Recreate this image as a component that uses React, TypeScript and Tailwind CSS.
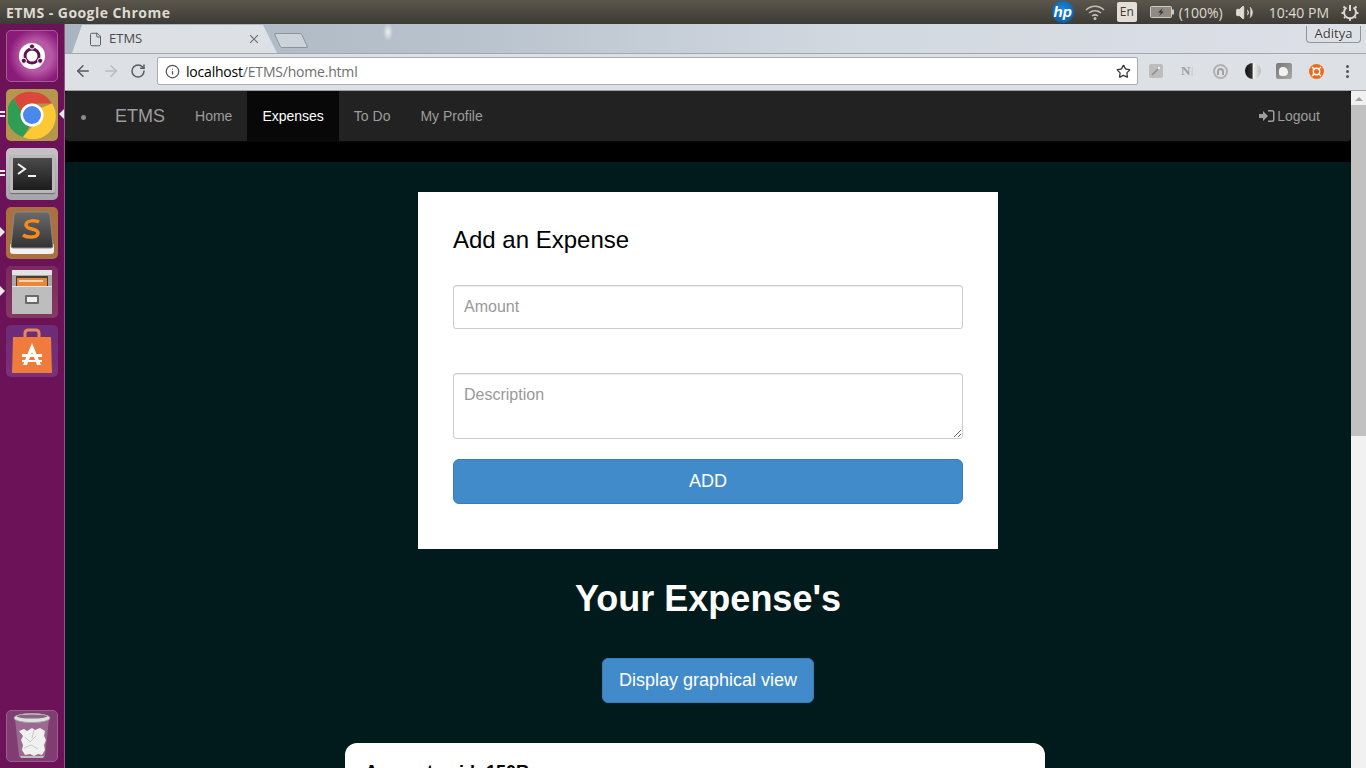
import { ReactNode } from "react";
import { ArrowLeft, ArrowRight, RotateCw, Star, X, Info, File, Volume2 } from "lucide-react";

const Tile = ({ className, children, pip }: { className: string; children: ReactNode; pip?: string }) => (
  <div className="relative flex h-[59px] w-[64px] shrink-0 items-center justify-center">
    {pip === "double" && (
      <div className="absolute left-0 top-[26px] flex flex-col gap-[2px]">
        <span className="h-[2px] w-[5px] bg-[#eeeeee]" />
        <span className="h-[2px] w-[5px] bg-[#eeeeee]" />
      </div>
    )}
    {pip === "single" && (
      <span className="absolute left-0 top-[24px] h-0 w-0 border-y-[5px] border-l-[5px] border-y-transparent border-l-[#e8e8e8]" />
    )}
    <div className={`flex h-[52px] w-[52px] items-center justify-center overflow-hidden rounded-[5px] ${className}`}>
      {children}
    </div>
  </div>
);

const Launcher = () => (
  <aside className="flex h-full w-[65px] shrink-0 flex-col border-r border-[#8a5a80] bg-[#6c1258] pt-[2px]">
    <Tile className="bg-[radial-gradient(circle_at_58%_50%,#b75aa6_0,#b75aa6_40%,#8c1a78_72%)] border border-[#a85a98]">
      <svg width="36" height="36" viewBox="0 0 36 36">
        <circle cx="18" cy="18" r="13" fill="#fff" />
        <circle cx="18" cy="18" r="7" fill="none" stroke="#5e1650" strokeWidth="3" />
        <circle cx="18" cy="8.500" r="2.600" fill="#5e1650" stroke="#fff" />
        <circle cx="9.800" cy="22.800" r="2.600" fill="#5e1650" stroke="#fff" />
        <circle cx="26.200" cy="22.800" r="2.600" fill="#5e1650" stroke="#fff" />
      </svg>
    </Tile>
    <div className="relative">
      <span className="absolute right-0 top-[24px] h-0 w-0 border-y-[5px] border-r-[5px] border-y-transparent border-r-[#e8e8e8]" />
      <Tile pip="double" className="bg-[#b4964e]">
        <svg width="48" height="48" viewBox="0 0 48 48">
          <path d="M24 1a23 23 0 0 1 20 11.500H24a11.500 11.500 0 0 0-11 8L5.500 7.500A23 23 0 0 1 24 1z" fill="#d9483b" />
          <path d="M5.500 7.500 16 25a11.500 11.500 0 0 0 6 9.500L15 46A23 23 0 0 1 5.500 7.500z" fill="#2f9e54" />
          <path d="M44 12.500A23 23 0 0 1 15 46l10-11.500A11.500 11.500 0 0 0 33 17z" fill="#fcc934" />
          <circle cx="24" cy="24" r="11.500" fill="#fff" />
          <circle cx="24" cy="24" r="9" fill="#4a88ee" />
        </svg>
      </Tile>
    </div>
    <Tile pip="double" className="bg-[linear-gradient(#c6c2c8,#a8a4ac)]">
      <div className="flex h-[38px] w-[45px] items-start rounded-[2px] border-[3px] border-[#b9b9b9] bg-[linear-gradient(#4a4a4a,#1c1c1c)] p-[3px] shadow-[0_1px_1px_#666]">
        <svg width="30" height="20" viewBox="0 0 30 20">
          <path d="M2 3l7 5-7 5" fill="none" stroke="#f2f2f2" strokeWidth="2" />
          <path d="M12 15h8" stroke="#f2f2f2" strokeWidth="2" />
        </svg>
      </div>
    </Tile>
    <Tile pip="single" className="bg-[#a9713f]">
      <svg width="46" height="44" viewBox="0 0 46 44">
        <defs>
          <linearGradient id="keycap" x1="0" y1="0" x2="0" y2="1">
            <stop offset="0" stopColor="#6a6a6a" />
            <stop offset="1" stopColor="#333333" />
          </linearGradient>
        </defs>
        <path d="M1 33h44v7a3 3 0 0 1-3 3H4a3 3 0 0 1-3-3z" fill="#f1f1f1" />
        <path d="M8 1h30a3 3 0 0 1 3 3l3 31a2 2 0 0 1-2 2H4a2 2 0 0 1-2-2L5 4a3 3 0 0 1 3-3z" fill="url(#keycap)" stroke="#888" />
        <path d="M30 11c-3-2-13-2-13 3 0 5 12 3 12 8 0 5-11 5-15 2" fill="none" stroke="#f28c1e" strokeWidth="3.500" />
      </svg>
    </Tile>
    <Tile pip="single" className="bg-[linear-gradient(#7a2a5e,#843a60)]">
      <svg width="42" height="46" viewBox="0 0 42 46">
        <rect x="1" y="1" width="40" height="44" rx="2" fill="#a8a8a8" />
        <rect x="1" y="1" width="40" height="5" fill="#e2e2e2" />
        <rect x="5" y="7" width="32" height="11" fill="#4a3a34" />
        <rect x="6" y="9" width="30" height="9" fill="#e8863c" />
        <rect x="8" y="11" width="24" height="2" fill="#f8d8b0" />
        <rect x="1" y="17" width="40" height="28" fill="#bdbdbd" />
        <rect x="1" y="17" width="40" height="1" fill="#e6e6e6" />
        <rect x="14" y="26" width="14" height="9" rx="1" fill="#6a6a6a" />
        <rect x="16" y="28" width="10" height="5" fill="#eeeeee" />
      </svg>
    </Tile>
    <Tile className="bg-[linear-gradient(#6c2c78,#7a3076)]">
      <svg width="42" height="46" viewBox="0 0 42 46">
        <path d="M14 9V5a3 3 0 0 1 3-3h8a3 3 0 0 1 3 3v4" fill="none" stroke="#e88a58" strokeWidth="3" />
        <path d="M2 9h38l1 36H1z" fill="#ef7c3c" />
        <path d="M21 15l-9 22h4l5-13 5 13h4z" fill="#fff" />
        <rect x="11" y="26" width="20" height="3" fill="#fff" />
        <rect x="11" y="32" width="20" height="2" fill="#fff" />
      </svg>
    </Tile>
    <div className="flex-1" />
    <Tile className="bg-[#813c71] border border-[#96608a]">
      <svg width="40" height="48" viewBox="0 0 40 48">
        <path d="M3 7l4 37a3 3 0 0 0 3 2h20a3 3 0 0 0 3-2l4-37z" fill="#9a6a90" />
        <ellipse cx="20" cy="6" rx="18" ry="4.500" fill="#e2e2e2" stroke="#a8a8a8" />
        <ellipse cx="20" cy="4.500" rx="15" ry="2" fill="#8a6684" />
        <path d="M7 19l5-2 3 2 5-3 3 2 5-2 5 3-1 5 2 4-2 5 1 5-3 5-4-1-4 2-4-2-5 1-3-5 1-5-2-5 2-4z" fill="#f0f0f0" />
        <path d="M13 25l5 5 6-6M12 36l7-3 7 4M22 18l-2 8" fill="none" stroke="#c8c8c8" />
        <path d="M8 44h24l-1 2H9z" fill="#bdbdbd" />
      </svg>
    </Tile>
    <div className="h-[3px]" />
  </aside>
);

const TopBar = () => (
  <header className="flex h-[24px] shrink-0 items-center justify-between bg-[linear-gradient(#5a564c,#3d3b36)] pl-[6px] pr-[7px] font-['Open_Sans',sans-serif] text-[#dfdbd2]">
    <span className="text-[14px] font-bold tracking-[0.45px]">ETMS - Google Chrome</span>
    <div className="flex items-center text-[14px]">
      <div className="mr-[11px] flex h-[22px] w-[22px] items-center justify-center rounded-full bg-[radial-gradient(circle_at_50%_40%,#1c8ad8,#0a4f9c)] font-['Liberation_Sans',sans-serif] text-[15px] font-bold italic text-white">
        hp
      </div>
      <svg className="mr-[12px]" width="20" height="15" viewBox="0 0 20 15" fill="none" stroke="#c4c0b8" strokeWidth="1.500">
        <path d="M1 5c5-5 13-5 18 0" />
        <path d="M4 8c3.500-3 8.500-3 12 0" />
        <path d="M7 11c2-1.500 4-1.500 6 0" />
        <circle cx="10" cy="13.500" r="0.800" fill="#c4c0b8" />
      </svg>
      <div className="mr-[13px] flex h-[20px] w-[20px] items-center justify-center rounded-[2px] bg-[#e3dfd8] text-[12px] text-[#3c3b37]">En</div>
      <svg className="mr-[5px]" width="24" height="12" viewBox="0 0 24 12">
        <rect x="0.500" y="0.500" width="21" height="11" rx="1" fill="#8e8b84" stroke="#cfcbc3" />
        <rect x="22" y="3.500" width="2" height="5" fill="#cfcbc3" />
        <path d="M13 2L8 6.500h3L9 10l5-4.500h-3z" fill="#33322e" />
      </svg>
      <span className="mr-[12px] text-[14px]">(100%)</span>
      <Volume2 className="mr-[15px]" size={19} color="#dfdbd2" fill="#dfdbd2" strokeWidth={1.200} />
      <span className="mr-[12px] text-[14px]">10:40 PM</span>
      <svg width="18" height="18" viewBox="0 0 18 18" fill="none" stroke="#dfdbd2" strokeWidth="2">
        <path d="M9 2v6" />
        <path d="M5.500 4.500a6 6 0 1 0 7 0" />
        <path d="M2.500 3.500l1.500 1.500M15.500 3.500L14 5M9 16v2M0.500 10h2M15.500 10h2M3 15l1-1M15 15l-1-1" strokeWidth="1.800" />
      </svg>
    </div>
  </header>
);

const ChromeBar = () => (
  <div className="shrink-0 font-['Open_Sans',sans-serif]">
    <div className="relative flex h-[29px] items-end bg-[radial-gradient(ellipse_5px_9px_at_323px_8px,#eef0f2,transparent),linear-gradient(90deg,#a8b4c0,#b8c2cc_30%,#d2d8e0_60%,#dde1e6)]">
      <div className="ml-[7px] flex h-[28px] w-[205px] items-center bg-[#dde1e6] [clip-path:polygon(0_100%,10px_0,191px_0,205px_100%)] pl-[16px] pr-[16px] text-[13px] text-[#4a4a4a]">
        <File size={15} color="#555" strokeWidth={1.500} />
        <span className="ml-[6px] flex-1">ETMS</span>
        <X size={14} color="#777" strokeWidth={2} />
      </div>
      <div className="mb-[5px] h-[15px] w-[28px] rounded-[2px] border border-[#8a949e] bg-[#cdd3da] [transform:skewX(25deg)]" />
      <div className="absolute right-[5px] top-[2px] flex h-[17px] w-[55px] items-center justify-center rounded-b-[4px] border border-t-0 border-[#8f959c] text-[13px] text-[#333] [text-shadow:0_0_1px_#fff,0_0_1px_#fff]">
        Aditya
      </div>
    </div>
    <div className="flex h-[38px] items-center border-y border-t-[#a0a8b0] border-b-[#a2a2a2] bg-[#dde1e6] pb-[2px] pl-[9px]">
      <ArrowLeft size={18} color="#5a5a5a" strokeWidth={2} />
      <ArrowRight className="ml-[10px]" size={18} color="#b8bcc0" strokeWidth={2} />
      <RotateCw className="ml-[10px]" size={16} color="#5a5a5a" strokeWidth={2.200} />
      <div className="ml-[11px] flex h-[28px] w-[981px] items-center rounded-[2px] border border-[#a8acb0] bg-white pl-[7px] pr-[6px]">
        <Info size={15} color="#555" strokeWidth={2} />
        <span className="ml-[6px] flex-1 text-[14px] tracking-[-0.2px] text-[#6e6e6e]">
          <span className="text-black">localhost</span>/ETMS/home.html
        </span>
        <Star size={15} color="#333" strokeWidth={2} />
      </div>
      <div className="ml-[11px] flex items-center">
        <svg width="14" height="14" viewBox="0 0 14 14">
          <rect width="14" height="14" rx="2" fill="#bdbdbd" />
          <path d="M3 11l6-6" stroke="#8a8a8a" strokeWidth="1.500" />
          <circle cx="10" cy="4" r="1.200" fill="#eeeeee" />
        </svg>
        <span className="ml-[18px] font-['Liberation_Serif',serif] text-[13px] font-bold text-[#a0a0a0]">N</span>
        <span className="text-[13px] font-light leading-none text-[#c0c0c0]">I</span>
        <div className="ml-[19px] flex h-[15px] w-[15px] items-center justify-center rounded-full border-2 border-[#b0b0b0]">
          <div className="h-[7px] w-[7px] rounded-t-full border-2 border-b-0 border-[#a0a0a0]" />
        </div>
        <div className="ml-[17px] h-[16px] w-[16px] rounded-full bg-[linear-gradient(90deg,#111,#333_45%,#f4f4f4_50%,#bbb)]" />
        <div className="ml-[15px] flex h-[16px] w-[16px] items-center justify-center rounded-[2px] bg-[linear-gradient(135deg,#777,#aaa)]">
          <div className="h-[9px] w-[9px] rounded-[50%_60%_50%_30%] bg-[#f2f2f2]" />
        </div>
        <svg className="ml-[17px]" width="15" height="15" viewBox="0 0 15 15">
          <circle cx="7.500" cy="7.500" r="7.500" fill="#f06a1e" />
          <circle cx="7.500" cy="7.500" r="3.200" fill="none" stroke="#fff" strokeWidth="1.400" />
          <path d="M3 3l2.500 2.500M12 3L9.500 5.500M3 12l2.500-2.500M12 12L9.500 9.500" stroke="#fff" strokeWidth="1.400" />
        </svg>
        <div className="ml-[22px] flex flex-col gap-[2px]">
          <span className="h-[3px] w-[3px] rounded-full bg-[#555]" />
          <span className="h-[3px] w-[3px] rounded-full bg-[#555]" />
          <span className="h-[3px] w-[3px] rounded-full bg-[#555]" />
        </div>
      </div>
    </div>
  </div>
);

const Navbar = () => (
  <nav className="flex h-[51px] shrink-0 items-stretch rounded-[4px] border-b border-[#080808] bg-[#222222] text-[14px] text-[#9d9d9d]">
    <span className="ml-[16px] mt-[24px] h-[5px] w-[5px] rounded-full bg-[#8a8a8a]" />
    <span className="ml-[29px] flex items-center text-[18px]">ETMS</span>
    <span className="ml-[15px] flex items-center px-[15px]">Home</span>
    <span className="flex items-center bg-[#080808] px-[15px] text-white">Expenses</span>
    <span className="flex items-center px-[15px]">To Do</span>
    <span className="flex items-center px-[15px]">My Profile</span>
    <span className="ml-auto flex items-center pr-[31px]">
      <svg className="mr-[2px]" width="16" height="14" viewBox="0 0 16 14" fill="#9d9d9d">
        <path d="M0 5h4V2l5 5-5 5V9H0z" />
        <path d="M9 1h4a2.500 2.500 0 0 1 2.500 2.500v7A2.500 2.500 0 0 1 13 13H9v-1.500h4a1 1 0 0 0 1-1v-7a1 1 0 0 0-1-1H9z" />
      </svg>
      Logout
    </span>
  </nav>
);

const Scrollbar = () => (
  <div className="flex w-[15px] shrink-0 flex-col items-center bg-[#f1f1f1]">
    <span className="mt-[6px] h-0 w-0 border-x-[4px] border-b-[4px] border-x-transparent border-b-[#a3a3a3]" />
    <div className="mt-[4px] h-[331px] w-full bg-[#c1c1c1]" />
  </div>
);

export default function App() {
  return (
    <div className="flex h-screen w-[1366px] flex-col overflow-hidden font-['Liberation_Sans',sans-serif]">
      <TopBar />
      <div className="flex min-h-0 flex-1">
        <Launcher />
        <div className="flex min-w-0 flex-1 flex-col">
          <ChromeBar />
          <div className="flex min-h-0 flex-1">
            <main className="flex min-w-0 flex-1 flex-col overflow-hidden bg-black">
              <Navbar />
              <div className="mt-[20px] flex flex-1 flex-col items-center bg-[#011a1c] pt-[30px]">
                <section className="w-[580px] shrink-0 bg-white px-[35px] pb-[45px] pt-[35px]">
                  <h2 className="text-[24px] leading-[26px] text-black">Add an Expense</h2>
                  <input
                    placeholder="Amount"
                    className="mt-[32px] block h-[44px] w-full rounded-[3px] border border-[#cccccc] px-[10px] text-[16px] shadow-[inset_0_1px_1px_rgba(0,0,0,0.075)] placeholder:text-[#999999]"
                  />
                  <textarea
                    placeholder="Description"
                    className="mt-[44px] block h-[66px] w-full rounded-[3px] border border-[#cccccc] px-[10px] py-[9px] text-[16px] shadow-[inset_0_1px_1px_rgba(0,0,0,0.075)] placeholder:text-[#999999]"
                  />
                  <button className="mt-[20px] block h-[45px] w-full rounded-[6px] border border-[#357ebd] bg-[#428bca] text-[18px] text-white">
                    ADD
                  </button>
                </section>
                <h1 className="mt-[30px] text-[36px] font-bold leading-[40px] text-white">Your Expense's</h1>
                <button className="mt-[39px] h-[45px] w-[212px] shrink-0 rounded-[6px] border border-[#357ebd] bg-[#428bca] text-[18px] text-white">
                  Display graphical view
                </button>
                <section className="ml-[280px] mt-[40px] h-[120px] w-[700px] shrink-0 self-start rounded-[12px] bg-white px-[20px] pt-[19px]">
                  <p className="text-[18px] font-bold leading-[20px] text-black">Amount paid: 150Rs</p>
                </section>
              </div>
            </main>
            <Scrollbar />
          </div>
        </div>
      </div>
    </div>
  );
}
